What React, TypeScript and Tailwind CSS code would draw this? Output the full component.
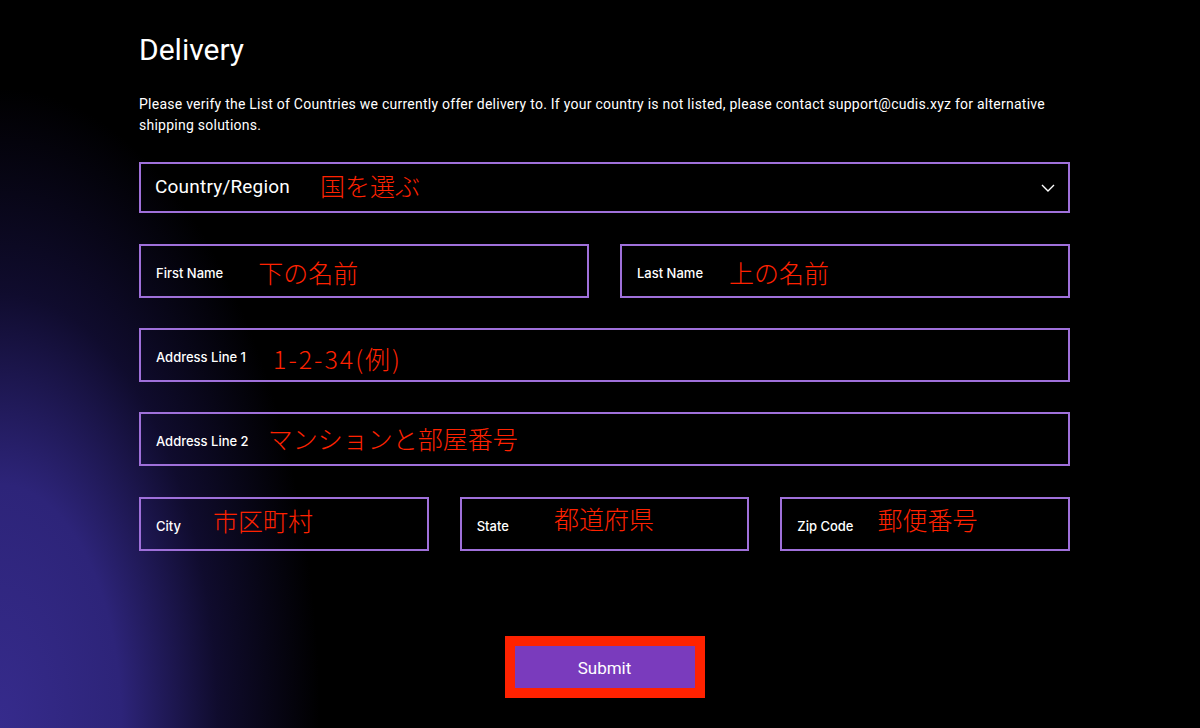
import { ReactNode } from "react"

const jp = "font-['Noto_Sans_CJK_JP',sans-serif] text-[#ff2200] text-[25px] font-light leading-none"

function Field({ label, note, noteClass, className = "" }: { label: string; note: string; noteClass: string; className?: string }) {
  return (
    <div className={`flex h-[54px] items-center border-2 border-[#9f70da] px-[15px] ${className}`}>
      <span className="mt-[5px] font-['Inter',sans-serif] text-[13px] font-medium text-white">{label}</span>
      <span className={`${jp} ${noteClass}`}>{note}</span>
    </div>
  )
}

function Row({ children, className = "" }: { children: ReactNode; className?: string }) {
  return <div className={`flex gap-[31px] ${className}`}>{children}</div>
}

export default function App() {
  return (
    <div className="min-h-screen w-full bg-black bg-[radial-gradient(ellipse_320px_640px_at_0%_100%,#362b8c_0%,#2d2479_38%,rgba(24,18,70,0.65)_68%,rgba(0,0,0,0)_100%)]">
      <div className="ml-[139px] w-[931px] pt-[32px] font-['Roboto',sans-serif] text-white">
        <h2 className="text-[30px] leading-[36px] font-normal">Delivery</h2>
        <p className="mt-[26px] text-[14px] leading-[21px] tracking-[0.25px]">
          Please verify the List of Countries we currently offer delivery to. If your country is not listed, please contact support@cudis.xyz for alternative shipping solutions.
        </p>

        {/* country select */}
        <div className="mt-[26px] flex h-[51px] items-center border-2 border-[#9f70da] pl-[14px] pr-[13px]">
          <span className="text-[19px] tracking-[0.2px]">Country/Region</span>
          <span className={`${jp} ml-[30px] -mt-[4px]`}>国を選ぶ</span>
          <svg className="ml-auto" width="14" height="8" viewBox="0 0 14 8" fill="none">
            <polyline points="1,1 7,7 13,1" stroke="white" strokeWidth="1.4" />
          </svg>
        </div>

        <Row className="mt-[31px]">
          <Field className="flex-1" label="First Name" note="下の名前" noteClass="ml-[35px] mt-[2px]" />
          <Field className="flex-1" label="Last Name" note="上の名前" noteClass="ml-[26px] mt-[2px]" />
        </Row>

        <Field className="mt-[30px]" label="Address Line 1" note="1-2-34(例)" noteClass="ml-[27px] mt-[6px] tracking-[2px]" />
        <Field className="mt-[30px]" label="Address Line 2" note="マンションと部屋番号" noteClass="ml-[19px] -mt-[2px]" />

        <Row className="mt-[31px] gap-[30px]">
          <Field className="flex-1" label="City" note="市区町村" noteClass="ml-[32px] -mt-[8px]" />
          <Field className="flex-1" label="State" note="都道府県" noteClass="ml-[45px] -mt-[12px]" />
          <Field className="flex-1" label="Zip Code" note="郵便番号" noteClass="ml-[24px] -mt-[10px]" />
        </Row>

        <div className="mx-auto mt-[85px] w-[200px] border-[10px] border-[#ff2200]">
          <button className="flex h-[42px] w-full items-center justify-center bg-[#7a3bbd] pt-[3px] text-[17px] text-white">
            Submit
          </button>
        </div>
      </div>
    </div>
  )
}
